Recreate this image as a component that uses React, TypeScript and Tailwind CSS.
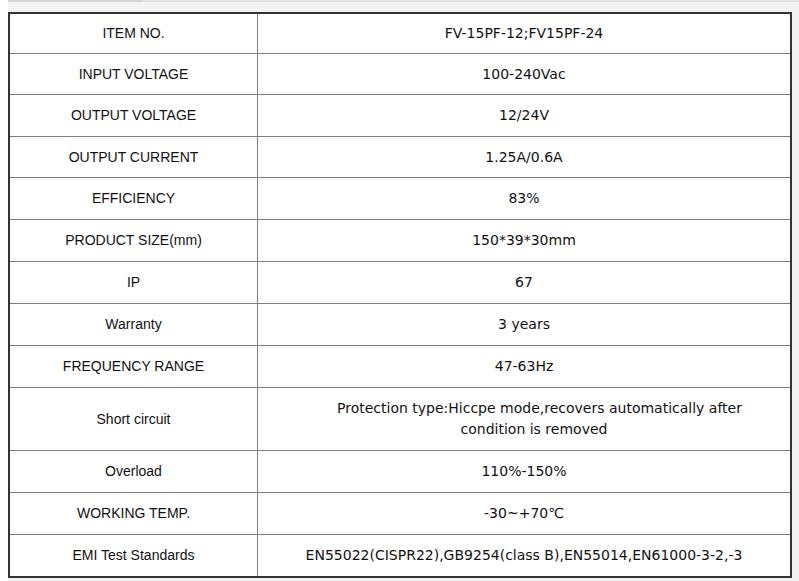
import React from "react";

type SpecRow = {
  label: string;
  value: React.ReactNode;
  h: string;
};

const rows: SpecRow[] = [
  { label: "ITEM NO.", value: "FV-15PF-12;FV15PF-24", h: "h-[39px]" },
  { label: "INPUT VOLTAGE", value: "100-240Vac", h: "h-[41px]" },
  { label: "OUTPUT VOLTAGE", value: "12/24V", h: "h-[42px]" },
  { label: "OUTPUT CURRENT", value: "1.25A/0.6A", h: "h-[41px]" },
  { label: "EFFICIENCY", value: "83%", h: "h-[42px]" },
  { label: "PRODUCT SIZE(mm)", value: "150*39*30mm", h: "h-[42px]" },
  { label: "IP", value: "67", h: "h-[42px]" },
  { label: "Warranty", value: "3 years", h: "h-[42px]" },
  { label: "FREQUENCY RANGE", value: "47-63Hz", h: "h-[42px]" },
  {
    label: "Short circuit",
    value: (
      <span className="block pl-[20px]">
        <span className="block pl-[11px]">Protection type:Hiccpe mode,recovers automatically after</span>
        <span className="block">condition is removed</span>
      </span>
    ),
    h: "h-[63px]",
  },
  { label: "Overload", value: "110%-150%", h: "h-[42px]" },
  { label: "WORKING TEMP.", value: "-30~+70℃", h: "h-[42px]" },
  {
    label: "EMI Test Standards",
    value: "EN55022(CISPR22),GB9254(class B),EN55014,EN61000-3-2,-3",
    h: "h-[42px]",
  },
];

export default function App() {
  return (
    <div className="w-[799px] h-[581px] bg-white overflow-hidden">
      <div className="ml-2 h-full bg-[#f3f3f3]">
        {/* scroll strip on top */}
        <div className="flex h-[2px]">
          <div className="w-[135px] bg-[#d6d6d6]" />
          <div className="flex-1 bg-[#e2e2e2]" />
        </div>
        <div className="pt-[10px]">
          <div className="w-[784px] border-2 border-[#333] bg-white text-[#111]">
            {rows.map((row, i) => (
              <div
                key={row.label}
                className={`flex ${row.h} ${i > 0 ? "border-t border-[#808080]" : ""}`}
              >
                <div className="w-[248px] shrink-0 border-r border-[#808080] flex items-center justify-center text-center font-['Liberation_Sans',Arial,sans-serif] text-[14px] leading-[21px]">
                  {row.label}
                </div>
                <div className="flex-1 flex items-center justify-center text-center font-['DejaVu_Sans',Verdana,sans-serif] text-[14px] leading-[21px]">
                  {row.value}
                </div>
              </div>
            ))}
          </div>
        </div>
      </div>
    </div>
  );
}
